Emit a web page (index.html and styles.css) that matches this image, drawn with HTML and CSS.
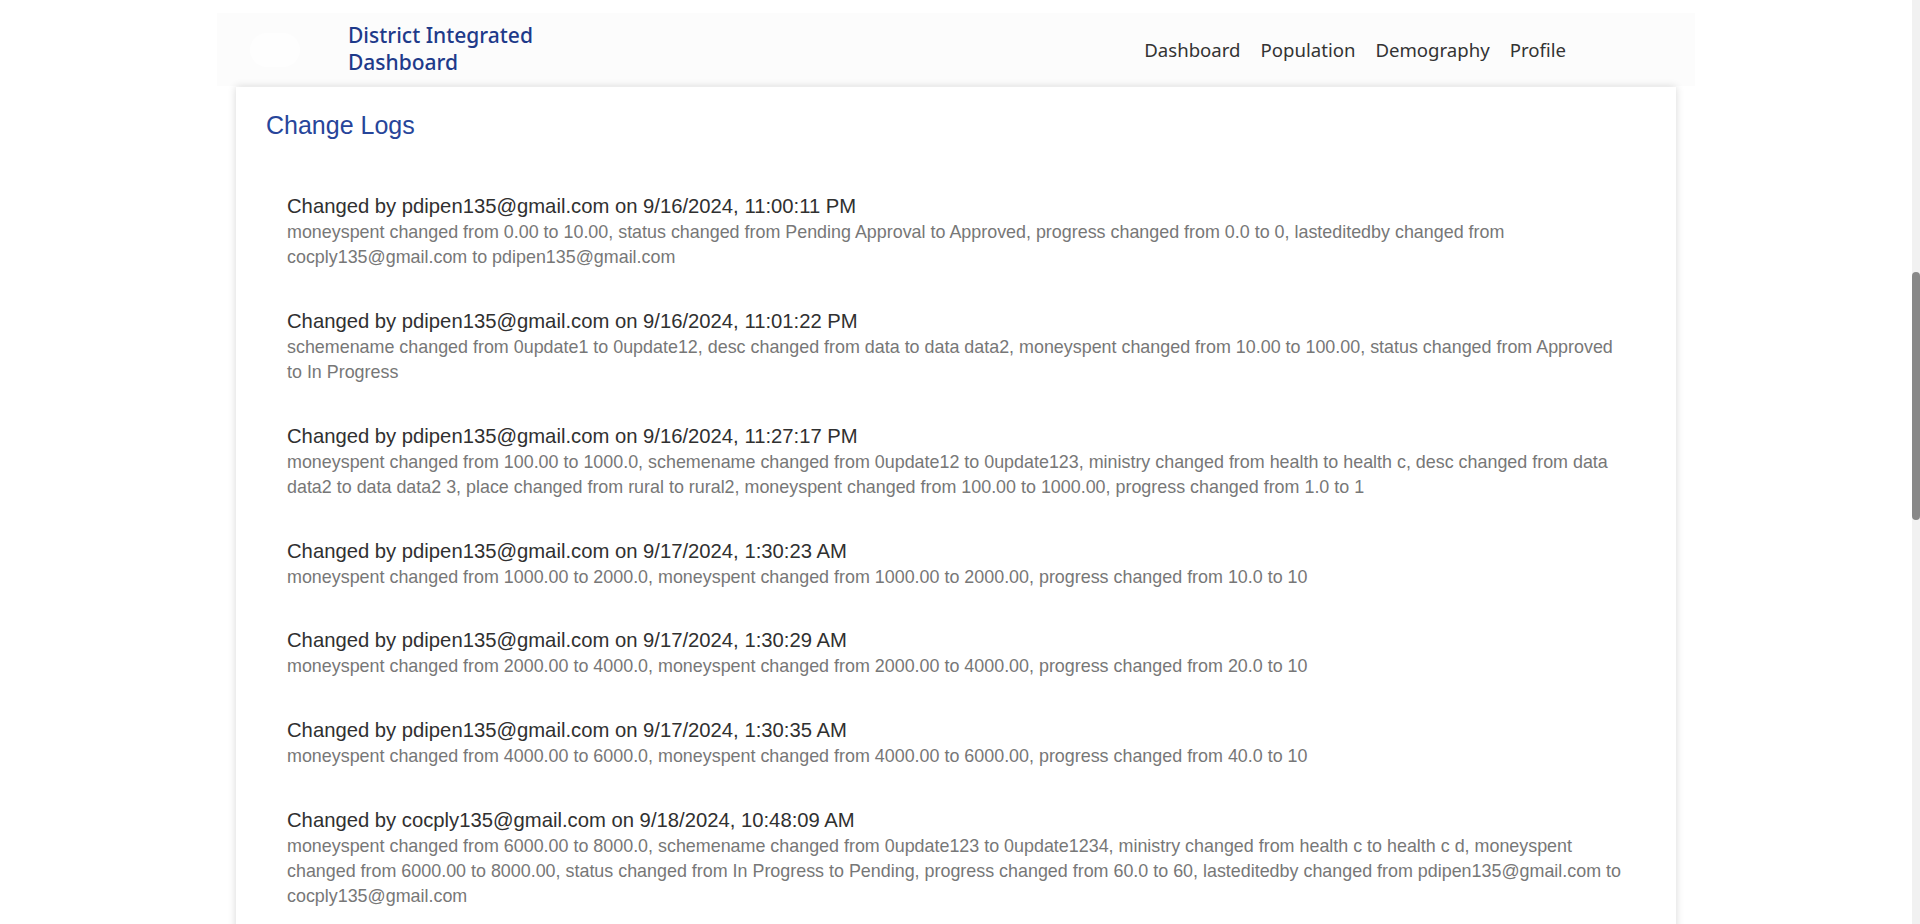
FILE: index.html
```html
<!DOCTYPE html>
<html lang="en">
<head>
<meta charset="utf-8">
<title>District Integrated Dashboard - Change Logs</title>
<link rel="stylesheet" href="styles.css">
</head>
<body>
<div class="page">
<header class="header">
  <nav class="navbar">
    <div class="brand">
      <div class="brand-logo"></div>
      <div class="brand-title">District Integrated<br>Dashboard</div>
    </div>
    <ul class="nav-links">
      <li><a href="#">Dashboard</a></li>
      <li><a href="#">Population</a></li>
      <li><a href="#">Demography</a></li>
      <li><a href="#">Profile</a></li>
    </ul>
  </nav>
</header>
<main class="card">
  <h2 class="card-title">Change Logs</h2>
  <ul class="log-list">
    <li class="log-item">
      <div class="log-head">Changed by pdipen135@gmail.com on 9/16/2024, 11:00:11 PM</div>
      <div class="log-desc">moneyspent changed from 0.00 to 10.00, status changed from Pending Approval to Approved, progress changed from 0.0 to 0, lasteditedby changed from cocply135@gmail.com to pdipen135@gmail.com</div>
    </li>
    <li class="log-item">
      <div class="log-head">Changed by pdipen135@gmail.com on 9/16/2024, 11:01:22 PM</div>
      <div class="log-desc">schemename changed from 0update1 to 0update12, desc changed from data to data data2, moneyspent changed from 10.00 to 100.00, status changed from Approved to In Progress</div>
    </li>
    <li class="log-item">
      <div class="log-head">Changed by pdipen135@gmail.com on 9/16/2024, 11:27:17 PM</div>
      <div class="log-desc">moneyspent changed from 100.00 to 1000.0, schemename changed from 0update12 to 0update123, ministry changed from health to health c, desc changed from data data2 to data data2 3, place changed from rural to rural2, moneyspent changed from 100.00 to 1000.00, progress changed from 1.0 to 1</div>
    </li>
    <li class="log-item">
      <div class="log-head">Changed by pdipen135@gmail.com on 9/17/2024, 1:30:23 AM</div>
      <div class="log-desc">moneyspent changed from 1000.00 to 2000.0, moneyspent changed from 1000.00 to 2000.00, progress changed from 10.0 to 10</div>
    </li>
    <li class="log-item">
      <div class="log-head">Changed by pdipen135@gmail.com on 9/17/2024, 1:30:29 AM</div>
      <div class="log-desc">moneyspent changed from 2000.00 to 4000.0, moneyspent changed from 2000.00 to 4000.00, progress changed from 20.0 to 10</div>
    </li>
    <li class="log-item">
      <div class="log-head">Changed by pdipen135@gmail.com on 9/17/2024, 1:30:35 AM</div>
      <div class="log-desc">moneyspent changed from 4000.00 to 6000.0, moneyspent changed from 4000.00 to 6000.00, progress changed from 40.0 to 10</div>
    </li>
    <li class="log-item">
      <div class="log-head">Changed by cocply135@gmail.com on 9/18/2024, 10:48:09 AM</div>
      <div class="log-desc">moneyspent changed from 6000.00 to 8000.0, schemename changed from 0update123 to 0update1234, ministry changed from health c to health c d, moneyspent changed from 6000.00 to 8000.00, status changed from In Progress to Pending, progress changed from 60.0 to 60, lasteditedby changed from pdipen135@gmail.com to cocply135@gmail.com</div>
    </li>
  </ul>
</main>
</div>
<div class="scrollbar" aria-hidden="true"><div class="scrollbar-thumb"></div></div>
</body>
</html>
```

FILE: styles.css
```css
html, body {
  margin: 0;
  padding: 0;
  background: #ffffff;
}

body {
  font-family: "Liberation Sans", Arial, sans-serif;
  color: #333333;
}

.page {
  margin-right: 8px;
}

/* page scrollbar (drawn over the right edge of the window) */
.scrollbar {
  position: fixed;
  top: 0;
  right: 0;
  width: 8px;
  height: 100vh;
  background: #f1f1f1;
}
.scrollbar-thumb {
  position: absolute;
  top: 272px;
  left: 0;
  width: 8px;
  height: 248px;
  border-radius: 4px;
  background: #888888;
}

.header {
  padding-top: 13px;
}

.navbar {
  width: 1478px;
  height: 73px;
  margin: 0 auto;
  box-sizing: border-box;
  padding: 0 129px 0 33px;
  background: #fcfcfc;
  display: flex;
  align-items: center;
  justify-content: space-between;
}

.brand {
  display: flex;
  align-items: center;
}

.brand-logo {
  width: 50px;
  height: 34px;
  margin-right: 48px;
  border-radius: 17px;
  background: #fefefe;
}

.brand-title {
  font-family: "Noto Sans", "Open Sans", sans-serif;
  font-size: 21px;
  font-weight: 500;
  line-height: 27px;
  color: #1e3a8a;
  margin-top: -2px;
}

.nav-links {
  list-style: none;
  margin: 0;
  padding: 0;
  display: flex;
  gap: 20px;
}

.nav-links a {
  font-family: "Noto Sans", "Open Sans", sans-serif;
  font-size: 18.6px;
  line-height: 25px;
  color: #333333;
  text-decoration: none;
}

.card {
  display: block;
  width: 1440px;
  margin: 1px auto 0;
  box-sizing: border-box;
  padding: 23px 30px 60px;
  background: #ffffff;
  box-shadow: 0 0 8px rgba(0, 0, 0, 0.16);
}

.card-title {
  margin: 0;
  font-size: 25px;
  font-weight: 400;
  line-height: 30px;
  color: #27459a;
}

.log-list {
  list-style: none;
  margin: 53px 0 0;
  padding: 0 22px 0 21px;
  display: flex;
  flex-direction: column;
  gap: 37.5px;
}

.log-head {
  font-size: 20.25px;
  line-height: 26px;
  color: #303030;
}

.log-desc {
  margin-top: 1px;
  font-size: 17.9px;
  line-height: 25.2px;
  color: #777777;
}
```
